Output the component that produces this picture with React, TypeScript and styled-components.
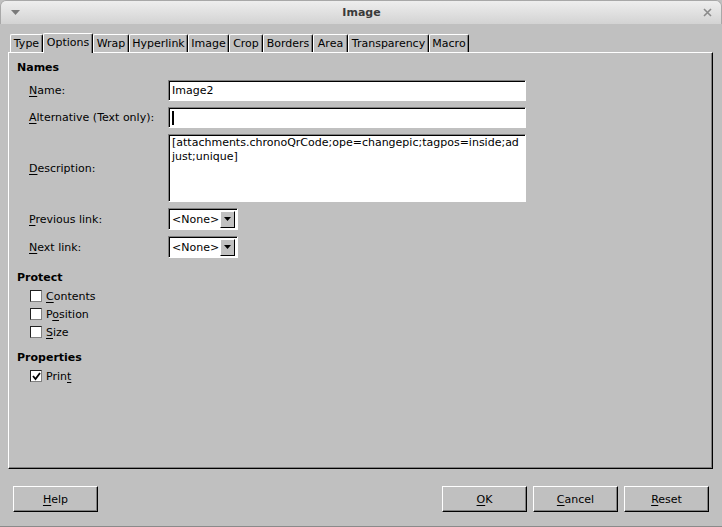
import React from 'react';
import styled, { createGlobalStyle } from 'styled-components';

const GlobalStyle = createGlobalStyle`
  html, body {
    margin: 0;
    padding: 0;
    background: #c0c0c0;
  }
`;

const Window = styled.div`
  width: 722px;
  height: 527px;
  box-sizing: border-box;
  display: flex;
  flex-direction: column;
  background: #c0c0c0;
  border-radius: 6px 6px 0 0;
  border-bottom: 1px solid #8a8a8a;
  overflow: hidden;
  font-family: 'DejaVu Sans', 'Liberation Sans', sans-serif;
  font-size: 11px;
  color: #000;
`;

const TitleBar = styled.div`
  flex: none;
  height: 24px;
  box-sizing: border-box;
  display: flex;
  align-items: center;
  justify-content: space-between;
  padding: 0 9px 0 10px;
  background: linear-gradient(#eeeeee, #d3d3d3);
  border: 1px solid #a8a8a8;
  border-bottom: none;
  border-radius: 6px 6px 0 0;
`;

const Title = styled.div`
  font-weight: bold;
  font-size: 11px;
  color: #3a3a3a;
`;

const Body = styled.div`
  flex: 1;
  display: flex;
  flex-direction: column;
  padding: 9px 9px 0 8px;
`;

const TabRow = styled.div`
  display: flex;
  align-items: flex-end;
  height: 19px;
  padding-left: 2px;
  position: relative;
  z-index: 1;
`;

const Tab = styled.div<{ $active?: boolean; $w: number }>`
  box-sizing: border-box;
  width: ${(p) => p.$w}px;
  height: ${(p) => (p.$active ? '20px' : '18px')};
  margin-bottom: ${(p) => (p.$active ? '-1px' : '0')};
  padding-top: 2px;
  display: flex;
  align-items: flex-start;
  justify-content: center;
  background: #c0c0c0;
  border-top: 1px solid #fff;
  border-left: 1px solid #fff;
  border-right: 1px solid #000;
  border-radius: 2px 2px 0 0;
  box-shadow: inset -1px 0 #808080;
  line-height: 14px;
  white-space: nowrap;
`;

const Panel = styled.div`
  flex: none;
  width: 705px;
  height: 417px;
  box-sizing: border-box;
  border-top: 1px solid #fff;
  border-left: 1px solid #fff;
  border-right: 1px solid #000;
  border-bottom: 1px solid #000;
  box-shadow: inset -1px -1px #808080;
  padding: 8px 8px 0 8px;
  display: flex;
  flex-direction: column;
`;

const Heading = styled.div<{ $gap?: number }>`
  font-weight: bold;
  line-height: 14px;
  margin-top: ${(p) => p.$gap ?? 0}px;
`;

const FieldRow = styled.div<{ $h: number; $gap?: number }>`
  display: flex;
  align-items: center;
  height: ${(p) => p.$h}px;
  margin-top: ${(p) => p.$gap ?? 6}px;
  padding-left: 12px;
`;

const Label = styled.div`
  width: 139px;
  flex: none;
`;

const Sunken = styled.div`
  box-sizing: border-box;
  background: #fff;
  border-style: solid;
  border-width: 1px;
  border-color: #808080 #fff #fff #808080;
  box-shadow: inset 1px 1px #000;
`;

const TextBox = styled(Sunken)<{ $multi?: boolean }>`
  width: 358px;
  height: 100%;
  padding: ${(p) => (p.$multi ? '1px' : '2px')} 3px 0 3px;
  line-height: ${(p) => (p.$multi ? '14px' : '15px')};
`;

const Caret = styled.span`
  display: inline-block;
  vertical-align: top;
  width: 2px;
  height: 14px;
  margin-top: 1px;
  background: #000;
`;

const Select = styled(Sunken)`
  width: 70px;
  height: 100%;
  display: flex;
  align-items: center;
  justify-content: space-between;
  padding: 2px 2px 2px 3px;
`;

const DropButton = styled.div`
  box-sizing: border-box;
  width: 15px;
  height: 17px;
  background: #c0c0c0;
  border-top: 1px solid #fff;
  border-left: 1px solid #fff;
  border-right: 1px solid #000;
  border-bottom: 1px solid #000;
  display: flex;
  align-items: center;
  justify-content: center;
`;

const CheckRow = styled.div<{ $gap?: number }>`
  display: flex;
  align-items: center;
  height: 18px;
  padding-left: 13px;
  margin-top: ${(p) => p.$gap ?? 0}px;
`;

const Box = styled.div`
  box-sizing: border-box;
  width: 12px;
  height: 12px;
  margin-right: 4px;
  background: #fff;
  border-style: solid;
  border-width: 1px;
  border-color: #202020 #808080 #808080 #202020;
  display: flex;
  align-items: center;
  justify-content: center;
`;

const Footer = styled.div`
  display: flex;
  align-items: center;
  margin-top: 17px;
  padding: 0 4px 0 5px;
`;

const Spacer = styled.div`
  flex: 1;
`;

const Button = styled.div`
  box-sizing: border-box;
  width: 85px;
  height: 26px;
  margin-left: 6px;
  display: flex;
  align-items: center;
  justify-content: center;
  border-top: 1px solid #fff;
  border-left: 1px solid #fff;
  border-right: 1px solid #000;
  border-bottom: 1px solid #000;
  box-shadow: inset -1px -1px #808080;
  &:first-child {
    margin-left: 0;
  }
`;

const U = styled.span`
  text-decoration: underline;
  text-underline-offset: 2px;
`;

const tabs: [string, number][] = [
  ['Type', 33],
  ['Options', 50],
  ['Wrap', 36],
  ['Hyperlink', 59],
  ['Image', 41],
  ['Crop', 34],
  ['Borders', 50],
  ['Area', 35],
  ['Transparency', 81],
  ['Macro', 40],
];

const Arrow = () => (
  <svg width="7" height="4" viewBox="0 0 7 4">
    <polygon points="0,0 7,0 3.5,4" fill="#000" />
  </svg>
);

const Check = () => (
  <svg width="9" height="9" viewBox="0 0 9 9">
    <polyline points="1,4 3.5,7 8,1" fill="none" stroke="#000" strokeWidth="1.8" />
  </svg>
);

const App = () => {
  return (
    <>
      <GlobalStyle />
      <Window>
        <TitleBar>
          <svg width="9" height="5" viewBox="0 0 9 5">
            <polygon points="0,0 9,0 4.5,5" fill="#7a7a7a" />
          </svg>
          <Title>Image</Title>
          <svg width="9" height="9" viewBox="0 0 9 9">
            <path d="M1 1 L8 8 M8 1 L1 8" stroke="#8a8a8a" strokeWidth="1.6" />
          </svg>
        </TitleBar>
        <Body>
          <TabRow>
            {tabs.map(([t, w]) => (
              <Tab key={t} $w={w} $active={t === 'Options'}>
                {t}
              </Tab>
            ))}
          </TabRow>
          <Panel>
            <Heading>Names</Heading>
            <FieldRow $h={21} $gap={5}>
              <Label>
                <U>N</U>ame:
              </Label>
              <TextBox>Image2</TextBox>
            </FieldRow>
            <FieldRow $h={21}>
              <Label>
                <U>A</U>lternative (Text only):
              </Label>
              <TextBox>
                <Caret />
              </TextBox>
            </FieldRow>
            <FieldRow $h={68}>
              <Label>
                <U>D</U>escription:
              </Label>
              <TextBox $multi>
                [attachments.chronoQrCode;ope=changepic;tagpos=inside;ad
                <br />
                just;unique]
              </TextBox>
            </FieldRow>
            <FieldRow $h={22}>
              <Label>
                <U>P</U>revious link:
              </Label>
              <Select>
                &lt;None&gt;
                <DropButton>
                  <Arrow />
                </DropButton>
              </Select>
            </FieldRow>
            <FieldRow $h={22}>
              <Label>
                <U>N</U>ext link:
              </Label>
              <Select>
                &lt;None&gt;
                <DropButton>
                  <Arrow />
                </DropButton>
              </Select>
            </FieldRow>

            <Heading $gap={13}>Protect</Heading>
            <CheckRow $gap={2}>
              <Box />
              <span>
                <U>C</U>ontents
              </span>
            </CheckRow>
            <CheckRow>
              <Box />
              <span>
                P<U>o</U>sition
              </span>
            </CheckRow>
            <CheckRow>
              <Box />
              <span>
                <U>S</U>ize
              </span>
            </CheckRow>

            <Heading $gap={10}>Properties</Heading>
            <CheckRow $gap={2}>
              <Box>
                <Check />
              </Box>
              <span>
                Prin<U>t</U>
              </span>
            </CheckRow>
          </Panel>
          <Footer>
            <Button>
              <span>
                <U>H</U>elp
              </span>
            </Button>
            <Spacer />
            <Button>
              <span>
                <U>O</U>K
              </span>
            </Button>
            <Button>
              <span>
                <U>C</U>ancel
              </span>
            </Button>
            <Button>
              <span>
                <U>R</U>eset
              </span>
            </Button>
          </Footer>
        </Body>
      </Window>
    </>
  );
};

export default App;
